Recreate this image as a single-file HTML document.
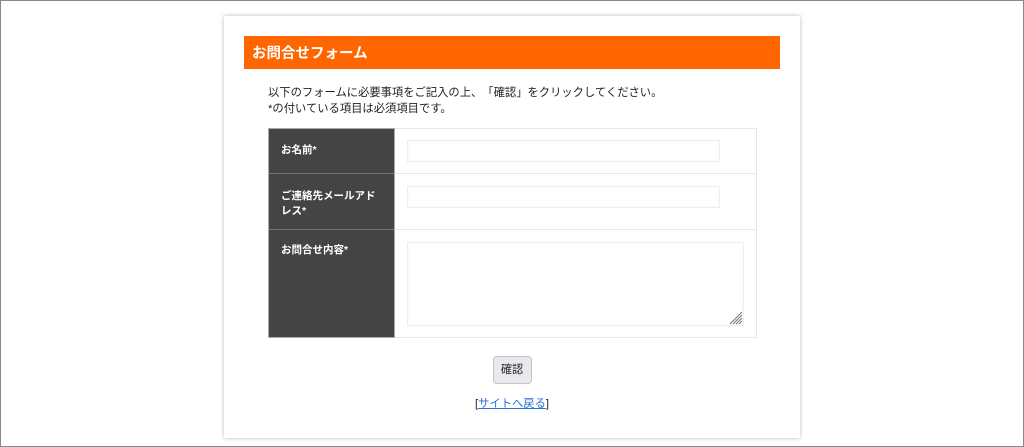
<!DOCTYPE html>
<html lang="ja">
<head>
<meta charset="utf-8">
<title>お問合せフォーム</title>
<style>
html,body{margin:0;padding:0;background:#fff}
body{width:1024px;height:447px;position:relative;overflow:hidden;font-family:"Liberation Sans","Noto Sans CJK JP",sans-serif;color:#333;text-spacing-trim:space-all;font-feature-settings:"palt" 0,"chws" 0}
.a{position:absolute;box-sizing:border-box}
.t{white-space:nowrap}
.lb{background:#444;color:#fff;font-weight:bold;font-size:10.5px;line-height:15px}
.f{background:#fff;border:1px solid #eee;box-shadow:inset 0 0 0 1px #fbfbfb}
.s{filter:blur(.3px)}
</style>
</head>
<body>
<div class="a" style="left:0;top:0;width:1024px;height:447px;border:1px solid #888"></div>
<div class="a" style="left:224px;top:16px;width:576px;height:422px;background:#fff;box-shadow:0 0 4px rgba(0,0,0,.28)"></div>
<div class="a" style="left:244px;top:36px;width:536px;height:33px;background:#f60"></div>
<div class="a t s" style="left:252px;top:38px;color:#fff;font-weight:bold;font-size:14.5px;line-height:33px">お問合せフォーム</div>
<div class="a t s" style="left:268px;top:85px;font-size:11.3px;line-height:16px;color:#222">以下のフォームに必要事項をご記入の上、「確認」をクリックしてください。<br>*の付いている項目は必須項目です。</div>

<div class="a" style="left:268px;top:128px;width:489px;height:210px;border:1px solid #e8e8e8"></div>
<div class="a" style="left:394px;top:173px;width:363px;height:1px;background:#e8e8e8"></div>
<div class="a" style="left:394px;top:229px;width:363px;height:1px;background:#e8e8e8"></div>

<div class="a" style="left:268px;top:128px;width:127px;height:210px;background:#444;border:1px solid #aaa"></div>
<div class="a" style="left:269px;top:173px;width:125px;height:1px;background:#777"></div>
<div class="a" style="left:269px;top:229px;width:125px;height:1px;background:#777"></div>
<div class="a lb t s" style="left:281px;top:143px">お名前*</div>
<div class="a lb s" style="left:281px;top:189px;width:96px">ご連絡先メールアドレス*</div>
<div class="a lb t s" style="left:281px;top:243px">お問合せ内容*</div>

<div class="a f" style="left:407px;top:140px;width:313px;height:22px"></div>
<div class="a f" style="left:407px;top:186px;width:313px;height:22px"></div>
<div class="a f" style="left:407px;top:242px;width:337px;height:84px"></div>
<svg class="a" style="left:729px;top:311px" width="14" height="14" viewBox="0 0 14 14"><g stroke="#777" stroke-width="1" fill="none"><path d="M1 13L13 1M4 13L13 4M7 13L13 7M10 13L13 10"/></g></svg>

<div class="a t" style="left:493px;top:356px;width:39px;height:28px;background:#e9e9ed;border:1px solid #c4c4c8;border-radius:4px"></div>
<div class="a t s" style="left:493px;top:357px;width:38px;font-size:11.15px;line-height:27px;text-align:center;color:#222">確認</div>
<div class="a t s" style="left:412px;top:396px;width:200px;text-align:center;font-size:11.3px;line-height:16px;color:#222">[<span style="color:#2a6fdb;text-decoration:underline">サイトへ戻る</span>]</div>
</body>
</html>
